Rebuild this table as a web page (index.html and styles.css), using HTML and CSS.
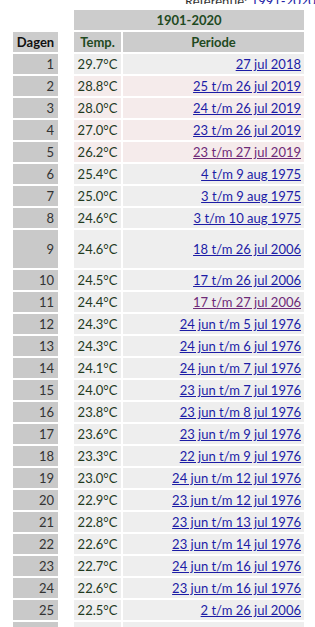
FILE: index.html
```html
<!DOCTYPE html>
<html lang="nl">
<head>
  <meta charset="UTF-8">
  <meta name="viewport" content="width=device-width, initial-scale=1.0">
  <title>Warmste periodes</title>
  <link rel="stylesheet" href="styles.css">
</head>
<body>
  <div class="ref">Referentie: <a href="#">1991-2020</a></div>

  <table class="records">
    <thead>
      <tr>
        <th class="blank"></th>
        <th class="spacer"></th>
        <th class="range" colspan="2">1901-2020</th>
      </tr>
      <tr>
        <th class="day-head">Dagen</th>
        <th class="spacer"></th>
        <th class="range">Temp.</th>
        <th class="range">Periode</th>
      </tr>
    </thead>
    <tbody>
      <tr><td class="day">1</td><td class="spacer"></td><td class="temp">29.7°C</td><td class="period"><a href="#">27 jul 2018</a></td></tr>
      <tr class="recent"><td class="day">2</td><td class="spacer"></td><td class="temp">28.8°C</td><td class="period"><a href="#">25 t/m 26 jul 2019</a></td></tr>
      <tr class="recent"><td class="day">3</td><td class="spacer"></td><td class="temp">28.0°C</td><td class="period"><a href="#">24 t/m 26 jul 2019</a></td></tr>
      <tr class="recent"><td class="day">4</td><td class="spacer"></td><td class="temp">27.0°C</td><td class="period"><a href="#">23 t/m 26 jul 2019</a></td></tr>
      <tr class="recent"><td class="day">5</td><td class="spacer"></td><td class="temp">26.2°C</td><td class="period"><a href="#" class="seen">23 t/m 27 jul 2019</a></td></tr>
      <tr><td class="day">6</td><td class="spacer"></td><td class="temp">25.4°C</td><td class="period"><a href="#">4 t/m 9 aug 1975</a></td></tr>
      <tr><td class="day">7</td><td class="spacer"></td><td class="temp">25.0°C</td><td class="period"><a href="#">3 t/m 9 aug 1975</a></td></tr>
      <tr><td class="day">8</td><td class="spacer"></td><td class="temp">24.6°C</td><td class="period"><a href="#">3 t/m 10 aug 1975</a></td></tr>
      <tr class="tall"><td class="day">9</td><td class="spacer"></td><td class="temp">24.6°C</td><td class="period"><a href="#">18 t/m 26 jul 2006</a></td></tr>
      <tr><td class="day">10</td><td class="spacer"></td><td class="temp">24.5°C</td><td class="period"><a href="#">17 t/m 26 jul 2006</a></td></tr>
      <tr><td class="day">11</td><td class="spacer"></td><td class="temp">24.4°C</td><td class="period"><a href="#" class="seen">17 t/m 27 jul 2006</a></td></tr>
      <tr><td class="day">12</td><td class="spacer"></td><td class="temp">24.3°C</td><td class="period"><a href="#">24 jun t/m 5 jul 1976</a></td></tr>
      <tr><td class="day">13</td><td class="spacer"></td><td class="temp">24.3°C</td><td class="period"><a href="#">24 jun t/m 6 jul 1976</a></td></tr>
      <tr><td class="day">14</td><td class="spacer"></td><td class="temp">24.1°C</td><td class="period"><a href="#">24 jun t/m 7 jul 1976</a></td></tr>
      <tr><td class="day">15</td><td class="spacer"></td><td class="temp">24.0°C</td><td class="period"><a href="#">23 jun t/m 7 jul 1976</a></td></tr>
      <tr><td class="day">16</td><td class="spacer"></td><td class="temp">23.8°C</td><td class="period"><a href="#">23 jun t/m 8 jul 1976</a></td></tr>
      <tr><td class="day">17</td><td class="spacer"></td><td class="temp">23.6°C</td><td class="period"><a href="#">23 jun t/m 9 jul 1976</a></td></tr>
      <tr><td class="day">18</td><td class="spacer"></td><td class="temp">23.3°C</td><td class="period"><a href="#">22 jun t/m 9 jul 1976</a></td></tr>
      <tr><td class="day">19</td><td class="spacer"></td><td class="temp">23.0°C</td><td class="period"><a href="#">24 jun t/m 12 jul 1976</a></td></tr>
      <tr><td class="day">20</td><td class="spacer"></td><td class="temp">22.9°C</td><td class="period"><a href="#">23 jun t/m 12 jul 1976</a></td></tr>
      <tr><td class="day">21</td><td class="spacer"></td><td class="temp">22.8°C</td><td class="period"><a href="#">23 jun t/m 13 jul 1976</a></td></tr>
      <tr><td class="day">22</td><td class="spacer"></td><td class="temp">22.6°C</td><td class="period"><a href="#">23 jun t/m 14 jul 1976</a></td></tr>
      <tr><td class="day">23</td><td class="spacer"></td><td class="temp">22.7°C</td><td class="period"><a href="#">24 jun t/m 16 jul 1976</a></td></tr>
      <tr><td class="day">24</td><td class="spacer"></td><td class="temp">22.6°C</td><td class="period"><a href="#">23 jun t/m 16 jul 1976</a></td></tr>
      <tr><td class="day">25</td><td class="spacer"></td><td class="temp">22.5°C</td><td class="period"><a href="#">2 t/m 26 jul 2006</a></td></tr>
      <tr><td class="day">26</td><td class="spacer"></td><td class="temp">22.4°C</td><td class="period"><a href="#">1 t/m 26 jul 2006</a></td></tr>
    </tbody>
  </table>
</body>
</html>
```

FILE: styles.css
```css
body {
  font-family: Lato, "Open Sans", sans-serif;
  font-size: 13px;
  margin: 0;
  background: #fff;
  color: #222;
  overflow: hidden;
}
a {
  color: #1c1ca6;
}
a.seen {
  color: #6e2a78;
}
.ref {
  height: 6px;
  line-height: 6px;
  padding-left: 185px;
  white-space: nowrap;
  overflow: hidden;
  color: #333;
  margin-top: -2px;
  margin-bottom: 4px;
}
.records {
  border-spacing: 2px;
  margin-left: 11px;
}
.records th,
.records td {
  height: 20px;
  padding: 0;
  line-height: 20px;
}
.records th {
  font-weight: bold;
  background: #cccccc;
  color: #1f4a1f;
  text-align: center;
}
.records th.day-head {
  color: #111;
}
.records th.blank,
.records .spacer {
  background: transparent;
  width: 12px;
}
.day {
  width: 41px;
  padding-right: 4px !important;
  background: #c9c9c9;
  text-align: right;
  color: #333;
}
.temp {
  width: 47px;
  background: #eeeeee;
  color: #1f3a1f;
  text-align: center;
}
.period {
  width: 178px;
  padding-right: 3px !important;
  background: #eeeeee;
  text-align: right;
}
.recent .temp,
.recent .period {
  background: #f5ebeb;
}
.records tr.tall td {
  height: 38px;
}
```
